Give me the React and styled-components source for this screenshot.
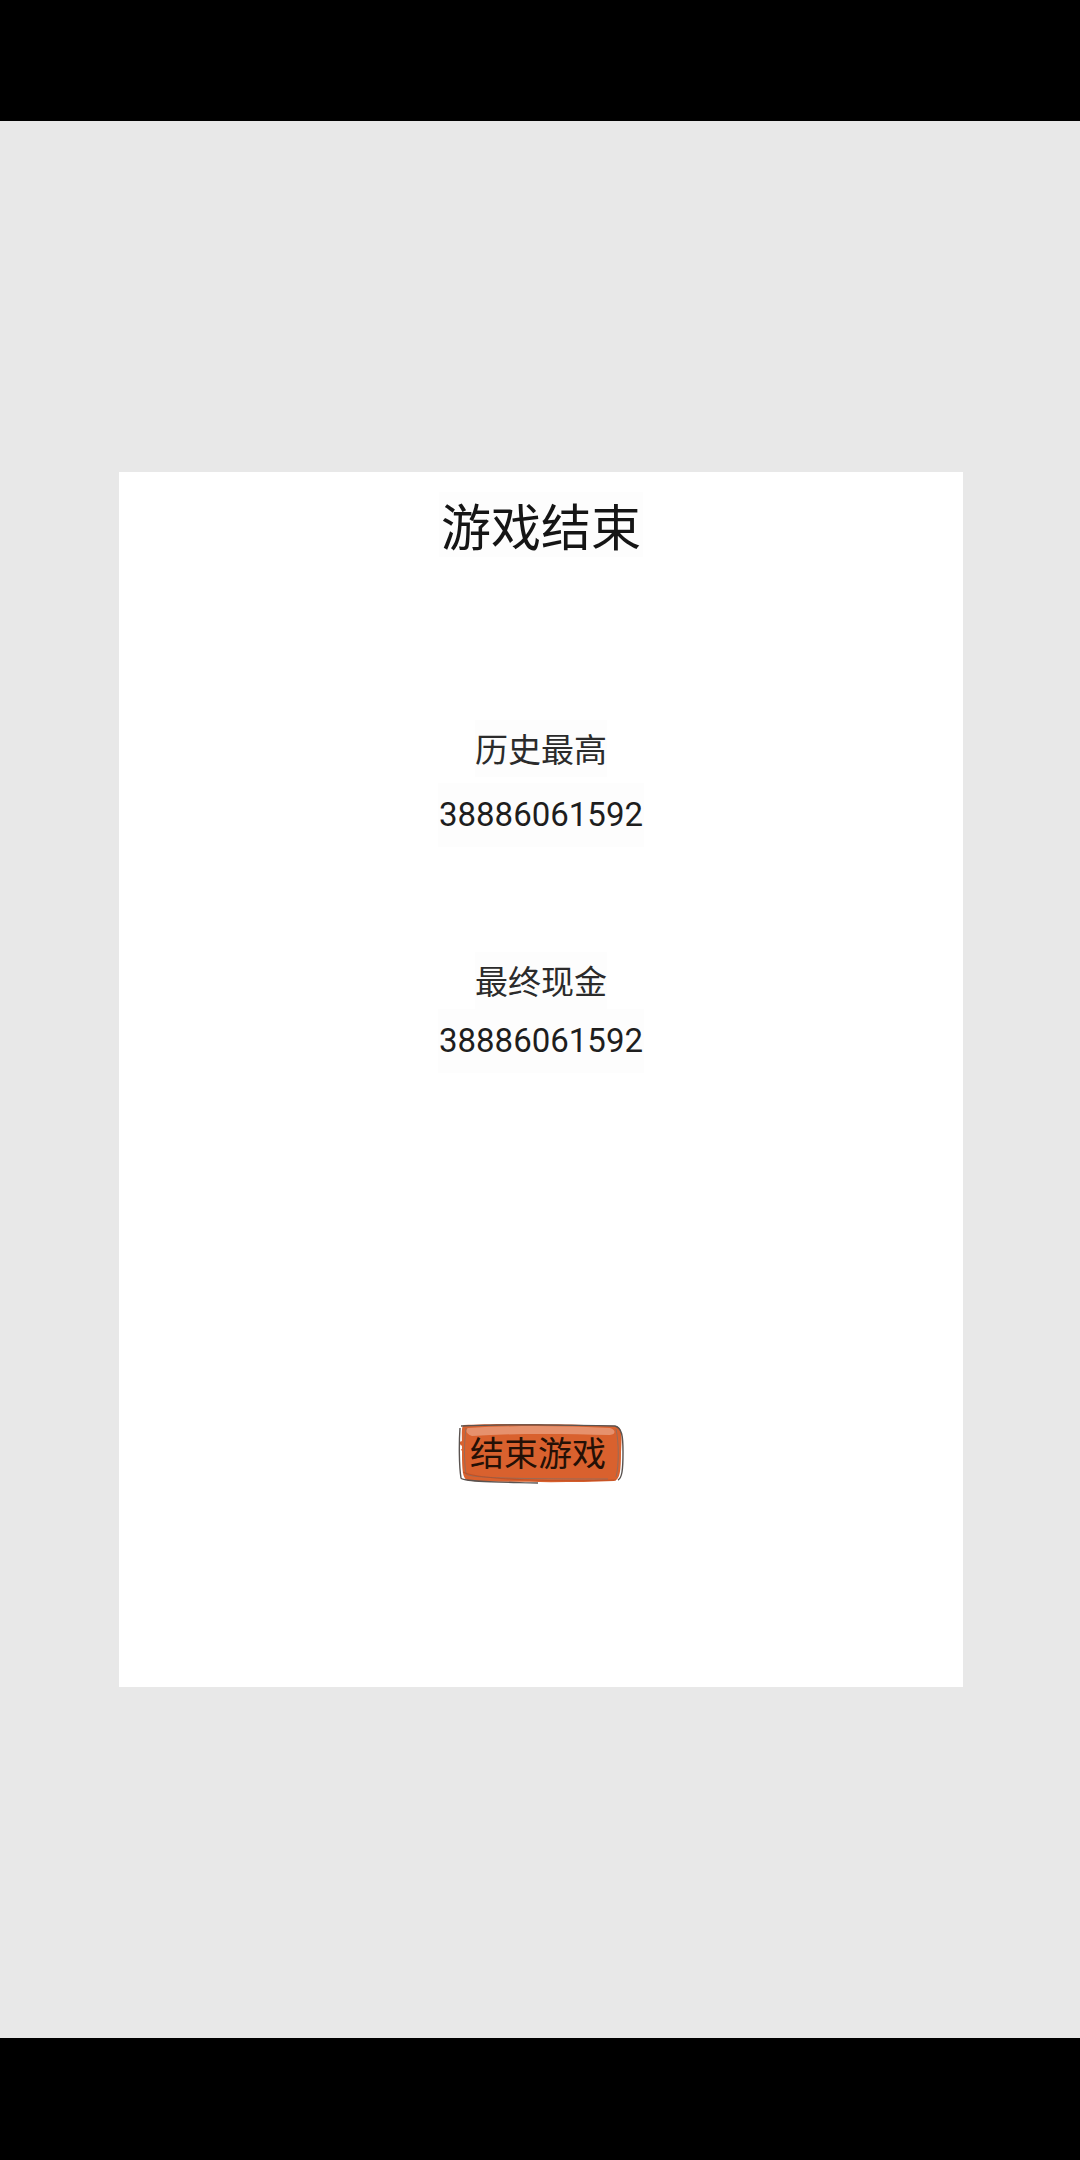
import React from 'react';
import styled, { createGlobalStyle } from 'styled-components';

const GlobalStyle = createGlobalStyle`
  html, body {
    margin: 0;
    padding: 0;
    background: #e8e8e8;
  }
  body {
    font-family: "Noto Sans CJK SC", "Noto Sans", sans-serif;
  }
`

const Screen = styled.div`
  width: 1080px;
  height: 2160px;
  display: flex;
  flex-direction: column;
  background: #e8e8e8;
`

const SystemBar = styled.div`
  height: ${({h}) => h}px;
  background: #000;
  flex-shrink: 0;
`

const Stage = styled.div`
  flex: 1;
  display: flex;
  flex-direction: column;
  align-items: center;
  padding-top: 351px;
`

const Panel = styled.div`
  width: 844px;
  height: 1215px;
  margin-left: 2px;
  background: #fff;
  display: flex;
  flex-direction: column;
  align-items: center;
`

const Title = styled.div`
  margin-top: 20px;
  font-size: 50px;
  line-height: 65px;
  color: #151515;
  background: #fdfdfd;
  padding: 0 2px;
`

const Label = styled.div`
  margin-top: ${({top}) => top}px;
  font-size: 33px;
  line-height: 57px;
  color: #2b2b2b;
  background: #fdfdfd;
`

const Value = styled.div`
  margin-top: ${({top}) => top}px;
  font-family: Roboto, "Noto Sans", sans-serif;
  font-size: 33px;
  line-height: 64px;
  color: #1e1e1e;
  background: #fdfdfd;
  padding: 0 1px;
`

const SketchButton = styled.button`
  position: relative;
  margin-top: ${({top}) => top}px;
  width: 166px;
  height: 62px;
  padding: 0;
  border: 0;
  background: transparent;
  font-family: "Noto Sans CJK SC", "Noto Sans", sans-serif;
  font-size: 34px;
  line-height: 62px;
  color: #241006;
  cursor: pointer;

  svg {
    position: absolute;
    left: 0;
    top: 0;
  }

  span {
    position: relative;
    display: block;
    margin-left: -6px;
    margin-top: -2px;
  }
`

const ButtonSketch = () => (
  <svg width="166" height="62" viewBox="0 0 166 62">
    <path
      d="M6 3 C40 1 120 2 158 4 C164 5 164 12 163 30 C163 48 162 58 156 59 C110 61 50 60 12 59 C5 58 4 52 4 30 C4 12 3 4 6 3 Z"
      fill="#d9612e"
    />
    <path
      d="M2 22 C8 18 12 24 6 28 C10 32 4 36 8 40"
      fill="none"
      stroke="#d9612e"
      strokeWidth="4"
    />
    <path
      d="M10 6 C60 3 110 4 152 6 C158 8 158 12 152 13 C110 12 60 11 14 14 C8 12 7 8 10 6 Z"
      fill="#eaa283"
      opacity="0.75"
    />
    <path
      d="M3 4 C40 2 120 3 157 4 C164 6 165 14 165 30 C165 48 164 56 160 58 M2 6 C1 20 1 44 3 56 C5 60 40 60 80 61"
      fill="none"
      stroke="#5a5350"
      strokeWidth="1.4"
    />
    <path
      d="M8 6 C6 20 6 40 8 52 C12 56 60 57 150 57 M158 7 C161 20 161 44 158 55"
      fill="none"
      stroke="#7a6f6a"
      strokeWidth="1"
      opacity="0.7"
    />
    <path
      d="M5 50 C20 58 100 60 158 58"
      fill="none"
      stroke="#b44820"
      strokeWidth="1.2"
      opacity="0.6"
    />
  </svg>
)

export default function App() {
  return (
    <Screen>
      <GlobalStyle />
      <SystemBar h={121} />
      <Stage>
        <Panel>
          <Title>游戏结束</Title>
          <Label top={163}>历史最高</Label>
          <Value top={6}>38886061592</Value>
          <Label top={105}>最终现金</Label>
          <Value top={0}>38886061592</Value>
          <SketchButton top={349}>
            <ButtonSketch />
            <span>结束游戏</span>
          </SketchButton>
        </Panel>
      </Stage>
      <SystemBar h={122} />
    </Screen>
  );
}
